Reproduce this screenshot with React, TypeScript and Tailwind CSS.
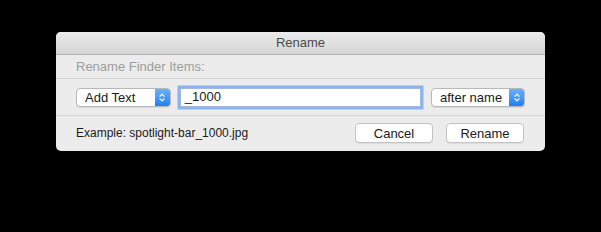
import { ChevronsUpDown } from "lucide-react";

function PopUp({ label, width }: { label: string; width: string }) {
  return (
    <div
      className={`${width} h-[19px] flex items-stretch rounded-[4px] border border-[#b8b8b8] bg-white shadow-[0_1px_0_rgba(0,0,0,0.08)] overflow-hidden`}
    >
      <span className="flex-1 flex items-center pl-[8px] text-[13px] text-[#1a1a1a] leading-none">
        {label}
      </span>
      <span className="w-[15px] flex items-center justify-center bg-gradient-to-b from-[#6ab0fb] to-[#1c7ff8]">
        <ChevronsUpDown className="w-[10px] h-[11px] text-white" strokeWidth={2.6} />
      </span>
    </div>
  );
}

function PushButton({ label }: { label: string }) {
  return (
    <button className="w-[78px] h-[20px] rounded-[4px] border border-[#c3c3c3] bg-white text-[13px] text-[#1a1a1a] leading-none shadow-[0_1px_0_rgba(0,0,0,0.06)]">
      {label}
    </button>
  );
}

export default function App() {
  return (
    <div
      className="w-[601px] h-[232px] bg-black pt-[32px] pl-[56px]"
      style={{ fontFamily: '"Liberation Sans", Arial, sans-serif' }}
    >
      <div className="w-[489px] h-[119px] rounded-[5px] bg-[#ececec] overflow-hidden flex flex-col">
        <div className="h-[23px] shrink-0 flex items-center justify-center bg-gradient-to-b from-[#ebebeb] to-[#d5d5d5] border-b border-[#b1b1b1] text-[13px] text-[#4a4a4a]">
          Rename
        </div>
        <div className="h-[24px] shrink-0 flex items-center px-[20px] border-b border-[#d6d6d6] text-[13px] text-[#9c9c9c]">
          Rename Finder Items:
        </div>
        <div className="h-[37px] shrink-0 flex items-center px-[20px] border-b border-[#d6d6d6]">
          <PopUp label="Add Text" width="w-[95px]" />
          <div className="ml-[9px] w-[242px] h-[19px] bg-white border border-[#9fb9e0] shadow-[0_0_0_2.5px_#8ab4ef] flex items-center pl-[4px] text-[13px] text-[#1a1a1a]">
            _1000
          </div>
          <div className="ml-[10px]">
            <PopUp label="after name" width="w-[94px]" />
          </div>
        </div>
        <div className="flex-1 flex items-center pl-[20px] pr-[21px] pb-[1px]">
          <span className="text-[12px] text-[#1a1a1a]">Example: spotlight-bar_1000.jpg</span>
          <div className="ml-auto flex gap-[13px]">
            <PushButton label="Cancel" />
            <PushButton label="Rename" />
          </div>
        </div>
      </div>
    </div>
  );
}
